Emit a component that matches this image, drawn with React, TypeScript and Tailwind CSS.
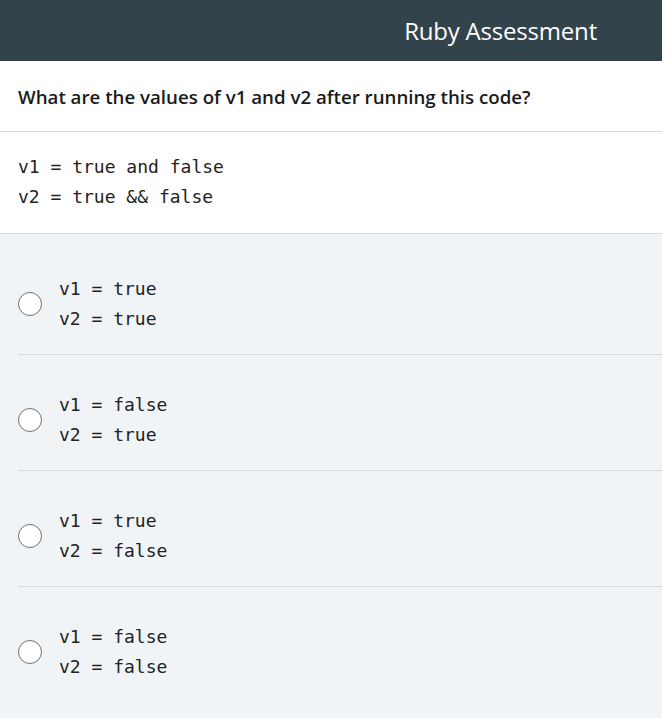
const options = [
  ["v1 = true", "v2 = true"],
  ["v1 = false", "v2 = true"],
  ["v1 = true", "v2 = false"],
  ["v1 = false", "v2 = false"],
];

export default function App() {
  return (
    <div className="w-[662px] h-[718px] overflow-hidden bg-[#f1f4f7] font-['Open_Sans',sans-serif]">
      {/* Header */}
      <header className="h-[61px] bg-[#33434b] flex items-center justify-end pr-[65px]">
        <h1 className="text-white text-[24px] tracking-[-0.2px]">Ruby Assessment</h1>
      </header>

      {/* Question */}
      <div className="bg-white h-[71px] pt-[3px] px-[18px] flex items-center border-b border-[#dcdcdc]">
        <p className="text-[18.7px] font-semibold text-[#1a1a1a]">
          What are the values of v1 and v2 after running this code?
        </p>
      </div>

      {/* Code */}
      <div className="bg-white px-[18px] pt-[20px] pb-[21px] border-b border-[#dcdcdc] font-['DejaVu_Sans_Mono',monospace] text-[18px] leading-[30px] text-[#222]">
        <div>v1 = true and false</div>
        <div>v2 = true &amp;&amp; false</div>
      </div>

      {/* Options */}
      <div className="pt-[5px] pl-[18px]">
        {options.map((lines, i) => (
          <label
            key={i}
            className="flex items-center gap-[17px] pt-[35px] pb-[20px] border-b border-[#d6d9dc] last:border-b-0 cursor-pointer"
          >
            <span className="w-[24px] h-[24px] rounded-full border-[1.5px] border-[#6f6f6f] bg-white shrink-0" />
            <div className="font-['DejaVu_Sans_Mono',monospace] text-[18px] leading-[30px] text-[#222]">
              <div>{lines[0]}</div>
              <div>{lines[1]}</div>
            </div>
          </label>
        ))}
      </div>
    </div>
  );
}
